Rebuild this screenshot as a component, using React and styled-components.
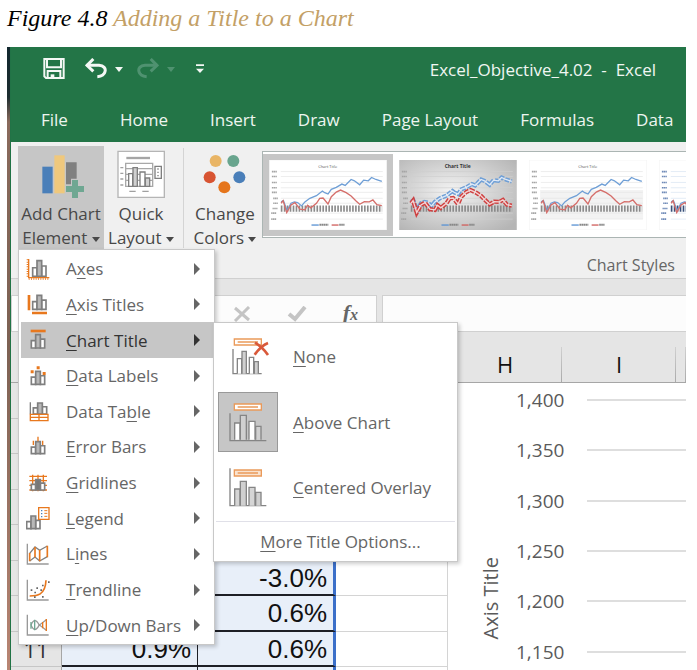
import React from "react";
import styled, { createGlobalStyle, css } from "styled-components";

const ui = '"Open Sans", "Noto Sans", sans-serif';

const GlobalStyle = createGlobalStyle`
  * { box-sizing: border-box; }
  body { margin: 0; background: #fff; font-family: ${ui}; }
  button { font: inherit; color: inherit; border: 0; padding: 0; background: none; }
  svg { display: block; flex: none; }
`;

const Page = styled.main`
  display: flex;
  flex-direction: column;
  height: 100vh;
  overflow: hidden;
  padding: 0 11px 0 7px;
`;
const Caption = styled.h1`
  margin: 0;
  height: 47px;
  font: italic 400 24px/37px "Liberation Serif", serif;
  color: #000;
  white-space: nowrap;
  flex: none;
  span { color: #c3a066; }
`;
const Window = styled.section`
  flex: 1;
  min-height: 0;
  display: flex;
  background: linear-gradient(#12282e 0, #1d2d30 50px, #8a6a5c 75px, #7d6153 300px, #b98573 100%);
  padding-left: 3px;
`;
const Workbook = styled.div`
  flex: 1;
  min-width: 0;
  display: flex;
  flex-direction: column;
  border-left: 1px solid #217346;
  background: #e5e5e5;
`;
const TitleBar = styled.header`
  height: 44px;
  flex: none;
  display: flex;
  align-items: center;
  justify-content: space-between;
  padding: 0 30px 0 32px;
  background: #237547;
  color: #f1f7f3;
  font-size: 17px;
`;
const QuickAccess = styled.div`
  display: flex;
  align-items: center;
  gap: 20px;
`;
const History = styled.div`
  display: flex;
  align-items: center;
  gap: 14px;
`;
const SplitButton = styled.div`
  display: flex;
  align-items: center;
  gap: 8px;
  color: ${(p) => (p.$off ? "#4f9270" : "#f4f8f5")};
`;
const DocTitle = styled.div`
  white-space: pre;
`;
const Tabs = styled.nav`
  height: 51px;
  flex: none;
  display: flex;
  align-items: center;
  gap: 42px;
  padding: 7px 0 0 30px;
  background: #237547;
  overflow: hidden;
`;
const Tab = styled.button`
  color: #eef5f0;
  font-size: 17px;
  line-height: 24px;
  white-space: nowrap;
  margin-right: ${(p) => (p.$first ? "10px" : "0")};
`;
const Ribbon = styled.div`
  height: 137px;
  flex: none;
  display: flex;
  background: #f0f0f0;
  border-bottom: 1px solid #d0d0d0;
  padding: 4px 0 0 7px;
`;
const MenuAnchor = styled.div`
  position: relative;
  width: 86px;
  height: 103px;
`;
const BigButton = styled.button`
  width: ${(p) => p.$width || 86}px;
  height: 104px;
  flex: none;
  display: flex;
  flex-direction: column;
  align-items: center;
  gap: 4px;
  padding-top: 4px;
  font-size: 17px;
  line-height: 24px;
  white-space: nowrap;
  color: #484848;
  background: ${(p) => (p.$active ? "#c6c6c6" : "transparent")};
`;
const Separator = styled.div`
  width: 1px;
  height: 100px;
  margin: 2px 4px 0 5px;
  background: #d4d4d4;
`;
const StylesGroup = styled.div`
  flex: 1;
  min-width: 0;
  padding-top: 5px;
  display: flex;
  flex-direction: column;
`;
const Gallery = styled.div`
  display: flex;
  overflow: hidden;
  height: 89px;
  padding-top: 2px;
  border: 1px solid #abb5b3;
  border-right: 0;
  background: #fff;
`;
const StyleButton = styled.button`
  flex: none;
  padding: 6px;
  height: 82px;
  background: ${(p) => (p.$active ? "#c6c6c6" : "transparent")};
`;
const GroupLabel = styled.div`
  text-align: right;
  padding: 14px 11px 0 0;
  font-size: 16px;
  line-height: 26px;
  color: #666;
`;

/* drop-down menus */
const panel = css`
  position: absolute;
  background: #fff;
  border: 1px solid #c8c8c8;
  box-shadow: 2px 2px 4px rgba(0, 0, 0, 0.2);
  color: #666;
  font-size: 17px;
`;
const Menu = styled.div`
  ${panel}
  z-index: 2;
  left: 0;
  top: 103px;
  width: 197px;
  height: 396px;
  padding: 1px 0 1px 2px;
  display: grid;
  grid-auto-rows: 1fr;
`;
const MenuRow = styled.div`
  position: relative;
  display: grid;
`;
const MenuItem = styled.button`
  display: flex;
  align-items: center;
  padding: 0 14px 0 5px;
  text-align: left;
  white-space: nowrap;
  color: ${(p) => (p.$active ? "#333" : "#666")};
  background: ${(p) => (p.$active ? "#c6c6c6" : "transparent")};
  u { text-underline-offset: 3px; }
`;
const ItemLabel = styled.span`
  flex: 1;
  margin-left: 16px;
`;
const SubMenu = styled.div`
  ${panel}
  left: 192px;
  top: 0;
  width: 245px;
  height: 240px;
  display: flex;
  flex-direction: column;
`;
const Options = styled.div`
  flex: 1;
  display: grid;
  grid-auto-rows: 1fr;
  padding: 1px 4px;
`;
const Option = styled.button`
  display: flex;
  align-items: center;
  gap: 15px;
  text-align: left;
  u { text-underline-offset: 3px; }
`;
const OptionIcon = styled.span`
  width: 60px;
  height: 60px;
  background: ${(p) => (p.$active ? "#c6c6c6" : "transparent")};
  border: 1px solid ${(p) => (p.$active ? "#999" : "transparent")};
`;
const MoreButton = styled.button`
  height: 40px;
  margin: 0 2px;
  padding-left: 10px;
  border-top: 1px solid #e0e0e8;
  u { text-underline-offset: 3px; }
`;

/* formula bar and sheet */
const FormulaBar = styled.div`
  margin-top: 16px;
  height: 36px;
  flex: none;
  display: grid;
  grid-template-columns: 199px 162px 1fr;
  column-gap: 5px;
`;
const FormulaBox = styled.div`
  display: flex;
  align-items: center;
  justify-content: space-between;
  padding: 0 18px 0 22px;
  border: 1px solid #d0d0d0;
  border-width: 1px 1px 0 1px;
  background: #fcfcfc;
  &:first-child { margin-right: 5px; }
  &:nth-child(2) { margin-left: -5px; }
`;
const FormulaInput = styled.input`
  min-width: 0;
  width: 100%;
  border: 1px solid #d0d0d0;
  border-width: 1px 0 0 1px;
  background: #fcfcfc;
`;
const Fx = styled.button`
  font: italic 700 22px/24px "Liberation Serif", serif;
  color: #666;
  small { font-size: 16px; }
`;
const ColumnHeads = styled.div`
  height: 52px;
  flex: none;
  display: grid;
  grid-template-columns: 51px 136px 138px 112px 114px 114px 1fr;
  border-top: 1px solid #d0d0d0;
  border-bottom: 1px solid #a6a6a6;
`;
const ColumnHead = styled.div`
  text-align: center;
  padding-top: 15px;
  font: 22px/34px "Open Sans", sans-serif;
  color: #111;
  background: linear-gradient(#d0d0d0, #aaa) right bottom / 1px 35px no-repeat;
`;
const Sheet = styled.div`
  flex: 1;
  min-height: 0;
  overflow: hidden;
  display: flex;
  align-items: flex-start;
  background: #fff;
`;
const Cells = styled.table`
  flex: none;
  width: 437px;
  table-layout: fixed;
  border-collapse: separate;
  border-spacing: 0;
`;
const Col = styled.col`
  width: ${(p) => p.$width}px;
`;
const SheetRow = styled.tr`
  height: 36px;
  &:nth-child(even) { height: 35px; }
`;
const RowHead = styled.th`
  padding: 0;
  font-weight: 400;
  font-size: 22px;
  line-height: 28px;
  color: #333;
  background: #e5e5e5;
  border-right: 1px solid #a6a6a6;
  border-bottom: 1px solid #c6c6c6;
`;
const Cell = styled.td`
  padding: 0 6px 0 0;
  text-align: right;
  font: 26px/28px "Liberation Sans", sans-serif;
  color: #111;
  border-bottom: 1px solid #d4d4d4;
  border-right: 1px solid #d4d4d4;
  ${(p) => p.$picked && css`
    background: #e8eff9;
    border-bottom: 2px solid #1d1f26;
    border-right: 1px solid #1d1f26;
  `}
  ${(p) => p.$edge && css`border-right: 3px solid #3b6fc9;`}
`;
const Chart = styled.figure`
  flex: 1;
  min-width: 0;
  margin: 0;
  display: flex;
  align-items: flex-start;
  color: #5a5a5a;
`;
const AxisTitle = styled.figcaption`
  writing-mode: vertical-rl;
  transform: rotate(180deg);
  margin: 174px 0 0 30px;
  width: 26px;
  font-size: 20px;
  line-height: 26px;
`;
const Scale = styled.div`
  flex: 1;
  display: grid;
  grid-template-rows: repeat(6, 1fr);
  height: 302px;
  margin: -8px 0 0 12px;
`;
const Tick = styled.div`
  display: flex;
  align-items: center;
  gap: 23px;
  font-size: 19px;
  line-height: 20px;
  &::after {
    content: "";
    flex: 1;
    height: 2px;
    background: #dedede;
  }
`;

const G = "#7f7f7f";
const O = "#e8781e";

const Caret = styled.span`
  display: inline-block;
  border: 4px solid transparent;
  border-top: 5px solid currentColor;
  border-bottom: 0;
  vertical-align: middle;
`;

const SaveIcon = () => (
  <svg width="22" height="22" viewBox="130 180 66 66" fill="none" stroke="#f4f8f5" strokeWidth="6">
    <path d="M134 183H192V240H139L134 235Z M142 184V208H184V184M144 240V219H182V240" />
    <path d="M153 229H164V241H153Z" fill="#f4f8f5" stroke="none" />
  </svg>
);
const UndoIcon = ({ flip }) => (
  <svg width="22" height="22" viewBox="0 0 66 66" fill="none" stroke="currentColor" strokeWidth="9">
    <g transform={flip ? "translate(66 0) scale(-1 1)" : undefined}>
      <path d="M5 22H42C56 23 63 31 60 41C58 50 50 55 37 56" />
      <path d="M25 3L6 22L25 40" />
    </g>
  </svg>
);
const CustomizeIcon = () => (
  <svg width="10" height="12" viewBox="0 0 30 36" fill="#f4f8f5">
    <path d="M3 4H27V9H3Z M3 17H27L15 30Z" />
  </svg>
);

const AddElementIcon = () => (
  <svg width="48" height="48" viewBox="111 30 144 144">
    <path fill="#4a7fb9" d="M127 80H158V160H127Z" />
    <path fill="#efc87d" d="M163 46H194V160H163Z" />
    <path fill="#808080" d="M198 67H230V116H213V133H198Z" />
    <path fill="#6fa792" d="M216 120H234V138H252V156H234V174H216V156H198V138H216Z" />
  </svg>
);
const QuickLayoutIcon = () => (
  <svg width="48" height="48" viewBox="348 30 144 144" fill="#fff" stroke={G} strokeWidth="4">
    <path stroke="#b5b5b5" strokeWidth="4" d="M351 34H490V172H351Z" />
    <path stroke="#a5a5a5" strokeWidth="7" d="M376 54H447" />
    <path stroke="#a8a8a8" d="M374 70H455V139H374Z M374 86H455M374 103H455M374 121H455" />
    <path stroke="#a0a0a0" d="M358 83H367M358 100H367M358 117H367M358 135H367M385 154H404M424 154H443" />
    <path d="M383 101H395V139H383Z M417 96H432V139H417Z" />
    <path fill="#d0d0d0" d="M396 83H409V139H396Z M433 114H446V139H433Z" />
    <path d="M462 79H481V115H462Z" />
    <path strokeDasharray="4 6" d="M471 85V111" />
  </svg>
);
const ColorsIcon = () => (
  <svg width="48" height="48" viewBox="603 30 144 144">
    <circle cx="647" cy="63" r="18" fill="#e9b565" />
    <circle cx="700" cy="63" r="18" fill="#69a58e" />
    <circle cx="629" cy="112" r="18" fill="#d85432" />
    <circle cx="718" cy="112" r="18" fill="#4a7fb9" />
    <circle cx="673" cy="142" r="18" fill="#e5751c" />
  </svg>
);

const BLUE = "78,186 85,182 96,212 108,190 118,186 128,188 140,198 150,186 165,175 185,167 203,153 210,158 220,162 230,148 245,142 262,132 272,136 290,118 300,122 316,134 328,120 342,122 352,112 365,118 383,124";
const RED = "78,190 84,182 95,218 108,195 120,188 135,208 150,210 158,196 168,204 185,190 195,175 205,174 220,192 230,170 245,156 258,150 275,158 290,168 305,183 316,193 330,185 345,186 356,180 368,194 383,197";

function Thumb({ kind }) {
  const navy = kind === "blue";
  const dark = kind === "dark";
  return (
    <svg width="118" height="70" viewBox="42 59 356 212" fill="none">
      <defs>
        <radialGradient id={"bg" + kind} cx="45%" cy="45%" r="70%">
          <stop offset="0" stopColor={dark ? "#f4f4f4" : "#fff"} />
          <stop offset="1" stopColor={dark ? "#b5b5b5" : "#fff"} />
        </radialGradient>
      </defs>
      <path fill={`url(#bg${kind})`} stroke={dark ? "none" : "#f0f0f0"} strokeWidth="2" d="M42 59H398V271H42Z" />
      {kind === "shade" && <path fill="#f3f3f3" d="M75 150H387V238H75Z" />}
      <path stroke={navy ? "#d6e2f2" : dark ? "#cfcfcf" : "#e5e5e5"} strokeWidth="2" d="M77 94H386M77 109H386M77 127H386M77 143H386M77 157H386M77 175H386M77 190H386M77 220H386M77 238H386" />
      <path stroke={navy ? "#6f8ab8" : "#a5a5a5"} strokeWidth="5" strokeDasharray="4 1 5 1 4 200" d="M50 94H68M50 109H68M50 127H68M50 143H68M50 157H68M54 175H68M54 190H68M52 206H68M48 220H68M48 238H68" />
      <path stroke={navy ? "#39507a" : "#8a8a8a"} strokeWidth="19" strokeDasharray="5 4" d="M77 206H384" />
      <polyline points={BLUE} stroke="#6f9fd6" strokeWidth={dark ? 13 : 4} strokeDasharray={dark ? "14 4" : undefined} />
      {dark && <polyline points={BLUE} stroke="#dfeaf8" strokeWidth="4" />}
      <polyline points={RED} stroke={dark ? "#cf4141" : "#d56e6a"} strokeWidth={dark ? 13 : 4} strokeDasharray={dark ? "14 4" : undefined} />
      {dark && <polyline points={RED} stroke="#f4d3d3" strokeWidth="4" />}
      {!navy && (
        <text x="219" y="82" textAnchor="middle" fontSize={dark ? 15 : 12} fontWeight={dark ? 700 : 400} fill={dark ? "#333" : "#555"}>Chart Title</text>
      )}
      <path stroke="#5b93d3" strokeWidth="4" d="M170 256H192" />
      <path stroke="#d0605c" strokeWidth="4" d="M231 256H252" />
      <path stroke="#888" strokeWidth="6" strokeDasharray="5 1" d="M194 255H221M254 255H270" />
    </svg>
  );
}

/* three-bar glyph shared by most menu icons: x = left edge, b = baseline, h = height of the middle bar */
const Bars = ({ x, b, h = 42, mid = "#b8b8b8" }) => (
  <g stroke={G} strokeWidth="5" fill="#fff">
    <path d={`M${x + 2} ${b}V${b - h * 0.55}H${x + 15}V${b}Z`} />
    <path d={`M${x + 29} ${b}V${b - h * 0.66}H${x + 42}V${b}Z`} />
    <path fill={mid} d={`M${x + 15} ${b}V${b - h}H${x + 29}V${b}Z`} />
  </g>
);
const AxisL = () => <path d="M4 5V66H68" fill="none" stroke="#999" strokeWidth="4" />;

const glyphs = {
  axes: <><Bars x={18} b={58} h={47} /><path d="M8 6V62H70" fill="none" stroke={O} strokeWidth="4" /><path d="M4 7V62" stroke={O} strokeWidth="4" strokeDasharray="3 4" /><path d="M8 66H70" stroke={O} strokeWidth="4" strokeDasharray="3 4" /></>,
  axisTitles: <><Bars x={18} b={52} h={42} /><path fill={O} d="M5 9H13V55H5Z M18 59H63V67H18Z" /></>,
  chartTitle: <><Bars x={14} b={60} h={40} /><path fill={O} d="M14 5H59V13H14Z" /></>,
  dataLabels: <><Bars x={14} b={61} h={39} /><path fill={O} d="M14 19H23V28H14Z M32 7H41V16H32Z M50 24H59V33H50Z" /></>,
  dataTable: <><path d="M13 10V46" stroke={G} strokeWidth="4" /><Bars x={20} b={45} h={33} /><path fill="#fff" stroke={O} strokeWidth="4" d="M13 46H66V65H13Z M13 55H66M39 46V65" /></>,
  errorBars: <><Bars x={14} b={56} h={36} /><path stroke={O} strokeWidth="4" d="M22 17V30M36 5V19M50 17V30" /></>,
  gridlines: <><path fill="none" stroke={O} strokeWidth="4" d="M10 16H63M10 29H63M10 43H63M10 57H63M20 11V61M36 11V61M52 11V61" /><Bars x={14} b={57} h={31} mid="#777" /></>,
  legend: <><Bars x={0} b={68} h={38} /><path fill="#fff" stroke={O} strokeWidth="4" d="M38 5H69V40H38Z" /><path stroke={O} strokeWidth="3" d="M55 14H64M55 22H64M55 31H64" /><path stroke="#4a7fb9" strokeWidth="4" strokeDasharray="4 5" d="M47 12V36" /></>,
  lines: <><AxisL /><path fill="none" stroke={G} strokeWidth="4" d="M11 34L27 15L41 25L64 12M11 57L27 45L41 57L64 44" /><path stroke={O} strokeWidth="5" d="M11 33V58M27 15V46M41 24V58M64 11V46" /></>,
  trendline: <><AxisL /><path fill="none" stroke={O} strokeWidth="5" d="M11 54C32 54 58 53 60 7" /><path fill="#666" d="M14 34h5v5h-5z M25 41h5v5h-5z M31 28h5v5h-5z M43 34h5v5h-5z M48 20h5v5h-5z M66 10h5v5h-5z M24 55h5v5h-5z M48 54h5v5h-5z" /></>,
  upDown: <><AxisL /><g fill="none" strokeWidth="4"><path stroke="#999" d="M15 36Q26 10 39 35L61 52M15 36Q26 62 39 37L61 20" /><path stroke="#6fa792" d="M26 20V52" /><path stroke="#6fa792" d="M15 27V47" /><path stroke={O} d="M50 27V46M61 18V54" /></g></>,
};

const MenuGlyph = ({ name }) => (
  <svg width="24" height="24" viewBox="0 0 72 72">{glyphs[name]}</svg>
);
const Arrow = () => (
  <svg width="6" height="12" viewBox="0 0 6 12" fill="currentColor"><path d="M0 0L6 6L0 12Z" /></svg>
);

function TitleOptionIcon({ kind }) {
  const none = kind === "none";
  const over = kind === "overlay";
  const fill = over ? "#d5d5d5" : "#fff";
  return (
    <svg width="58" height="58" viewBox="2 2 174 174" fill="none" stroke="#858585" strokeWidth="4">
      {none ? (
        <>
          <path d="M44 65V139H130" />
          <path fill="#fff" d="M57 139V94H70V139 M93 139V90H106V139" />
          <path fill="#d0d0d0" d="M71 139V72H84V139 M108 139V103H120V139" />
        </>
      ) : (
        <>
          <path d={over ? "M35 30V142H144" : "M35 63V145H144"} />
          <path fill={fill} d="M49 142V92H65V142 M92 142V87H110V142" />
          <path fill="#d0d0d0" d="M66 142V69H84V142 M112 142V102H128V142" />
        </>
      )}
      <path fill={over ? "#f9e3d0" : "#fff"} stroke="#ea9a5a" d="M48 35H129V53H48Z M58 44H119" />
      {none && <path stroke="#d9593a" strokeWidth="8" d="M110 46C125 55 138 67 149 83M149 47C134 53 119 68 109 82" />}
    </svg>
  );
}

const items = [
  ["axes", "A", "x", "es"],
  ["axisTitles", "", "A", "xis Titles"],
  ["chartTitle", "", "C", "hart Title"],
  ["dataLabels", "", "D", "ata Labels"],
  ["dataTable", "Data Ta", "b", "le"],
  ["errorBars", "", "E", "rror Bars"],
  ["gridlines", "", "G", "ridlines"],
  ["legend", "", "L", "egend"],
  ["lines", "L", "i", "nes"],
  ["trendline", "", "T", "rendline"],
  ["upDown", "", "U", "p/Down Bars"],
];
const options = [
  ["none", "N", "one"],
  ["above", "A", "bove Chart"],
  ["overlay", "C", "entered Overlay"],
];
const rows = [
  {}, {}, {}, {}, {},
  { g: "-3.0%" },
  { g: "0.6%" },
  { head: "11", f: "0.9%", g: "0.6%" },
  {},
];
const tabs = ["File", "Home", "Insert", "Draw", "Page Layout", "Formulas", "Data"];
const ticks = ["1,400", "1,350", "1,300", "1,250", "1,200", "1,150"];

function TitleMenu() {
  return (
    <SubMenu role="menu">
      <Options>
        {options.map(([kind, key, rest]) => (
          <Option key={kind} role="menuitem">
            <OptionIcon $active={kind === "above"}><TitleOptionIcon kind={kind} /></OptionIcon>
            <span><u>{key}</u>{rest}</span>
          </Option>
        ))}
      </Options>
      <MoreButton role="menuitem"><u>M</u>ore Title Options...</MoreButton>
    </SubMenu>
  );
}

function ElementMenu() {
  return (
    <Menu role="menu">
      {items.map(([name, before, key, after]) => {
        const active = name === "chartTitle";
        return (
          <MenuRow key={name}>
            <MenuItem role="menuitem" aria-haspopup="menu" $active={active}>
              <MenuGlyph name={name} />
              <ItemLabel>{before}<u>{key}</u>{after}</ItemLabel>
              <Arrow />
            </MenuItem>
            {active && <TitleMenu />}
          </MenuRow>
        );
      })}
    </Menu>
  );
}

export default function App() {
  return (
    <Page>
      <GlobalStyle />
      <Caption>Figure 4.8 <span>Adding a Title to a Chart</span></Caption>
      <Window>
        <Workbook>
          <TitleBar>
            <QuickAccess>
              <button aria-label="Save"><SaveIcon /></button>
              <History>
                <SplitButton><button aria-label="Undo"><UndoIcon /></button><Caret /></SplitButton>
                <SplitButton $off><button aria-label="Redo"><UndoIcon flip /></button><Caret /></SplitButton>
              </History>
              <button aria-label="Customize toolbar"><CustomizeIcon /></button>
            </QuickAccess>
            <DocTitle>Excel_Objective_4.02  -  Excel</DocTitle>
          </TitleBar>
          <Tabs>
            {tabs.map((t, i) => <Tab key={t} $first={i === 0}>{t}</Tab>)}
          </Tabs>
          <Ribbon>
            <MenuAnchor>
              <BigButton $active aria-haspopup="menu" aria-expanded="true">
                <AddElementIcon />
                <span>Add Chart<br />Element <Caret /></span>
              </BigButton>
              <ElementMenu />
            </MenuAnchor>
            <BigButton $width={74}>
              <QuickLayoutIcon />
              <span>Quick<br />Layout <Caret /></span>
            </BigButton>
            <Separator />
            <BigButton $width={74}>
              <ColorsIcon />
              <span>Change<br />Colors <Caret /></span>
            </BigButton>
            <StylesGroup>
              <Gallery>
                {["plain", "dark", "shade", "blue"].map((k) => (
                  <StyleButton key={k} $active={k === "plain"} aria-label={"Style " + k}><Thumb kind={k} /></StyleButton>
                ))}
              </Gallery>
              <GroupLabel>Chart Styles</GroupLabel>
            </StylesGroup>
          </Ribbon>
          <FormulaBar>
            <FormulaBox />
            <FormulaBox>
              <button aria-label="Cancel">
                <svg width="18" height="16" viewBox="0 0 18 16" fill="none" stroke="#c4c4c4" strokeWidth="3"><path d="M2 2L16 14M16 1L2 15" /></svg>
              </button>
              <button aria-label="Enter">
                <svg width="20" height="16" viewBox="0 0 20 16" fill="none" stroke="#c4c4c4" strokeWidth="4"><path d="M2 8L8 13L18 1" /></svg>
              </button>
              <Fx aria-label="Insert function">f<small>x</small></Fx>
            </FormulaBox>
            <FormulaInput aria-label="Formula" />
          </FormulaBar>
          <ColumnHeads>
            {["", "", "", "", "H", "I", ""].map((c, i) => <ColumnHead key={i}>{c}</ColumnHead>)}
          </ColumnHeads>
          <Sheet>
            <Cells>
              <colgroup><Col $width={51} /><Col $width={136} /><Col $width={138} /><Col $width={112} /></colgroup>
              <tbody>
                {rows.map((r, i) => (
                  <SheetRow key={i}>
                    <RowHead>{r.head}</RowHead>
                    <Cell $picked>{r.f}</Cell>
                    <Cell $picked $edge>{r.g}</Cell>
                    <Cell />
                  </SheetRow>
                ))}
              </tbody>
            </Cells>
            <Chart>
              <AxisTitle>Axis Title</AxisTitle>
              <Scale>{ticks.map((t) => <Tick key={t}>{t}</Tick>)}</Scale>
            </Chart>
          </Sheet>
        </Workbook>
      </Window>
    </Page>
  );
}
